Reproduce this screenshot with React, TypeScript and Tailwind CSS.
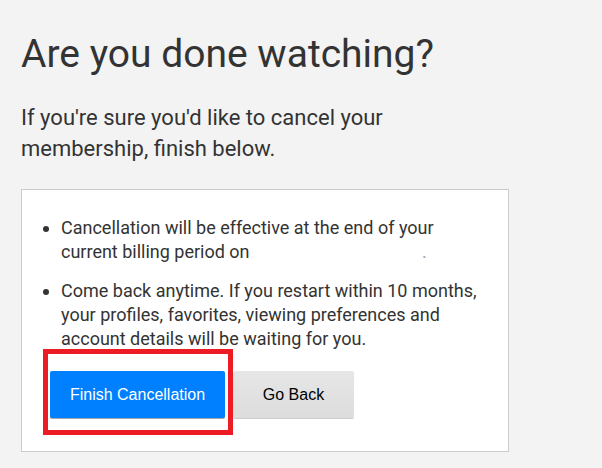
export default function App() {
  return (
    <div
      className="min-h-screen bg-[#f3f3f3] px-[21px] pt-[30px] text-[#333]"
      style={{ fontFamily: 'Roboto, "Liberation Sans", sans-serif' }}
    >
      <h1 className="text-[39px] leading-[48px] font-normal">Are you done watching?</h1>
      <p className="mt-[24px] w-[440px] text-[22px] leading-[31px]">
        If you're sure you'd like to cancel your membership, finish below.
      </p>

      <div className="mt-[25px] w-[488px] border border-[#cccccc] bg-white px-[28px] pb-[33px] pt-[26px]">
        <ul className="list-disc pl-[11px] text-[18px] leading-[24px]">
          <li className="mb-[15px]">
            Cancellation will be effective at the end of your current billing period on{' '}
            <span className="pl-[168px] text-[#9aa3b8]">.</span>
          </li>
          <li>
            Come back anytime. If you restart within 10 months, your profiles, favorites, viewing
            preferences and account details will be waiting for you.
          </li>
        </ul>

        <div
          className="relative mt-[20px] flex gap-[8px]"
          style={{ fontFamily: '"Liberation Sans", Arial, sans-serif' }}
        >
          <button className="h-[47px] w-[175px] rounded-[2px] bg-[#0080ff] text-[16px] text-white shadow-[0_1px_0_rgba(0,0,0,0.35)]">
            Finish Cancellation
          </button>
          <button className="h-[47px] w-[121px] rounded-[2px] bg-gradient-to-b from-[#e6e6e6] to-[#dddddd] text-[16px] text-black shadow-[0_1px_0_rgba(0,0,0,0.2)]">
            Go Back
          </button>
          <div className="pointer-events-none absolute left-[-7px] top-[-22px] h-[86px] w-[190px] border-[5px] border-[#ed1c24]" />
        </div>
      </div>
    </div>
  );
}
